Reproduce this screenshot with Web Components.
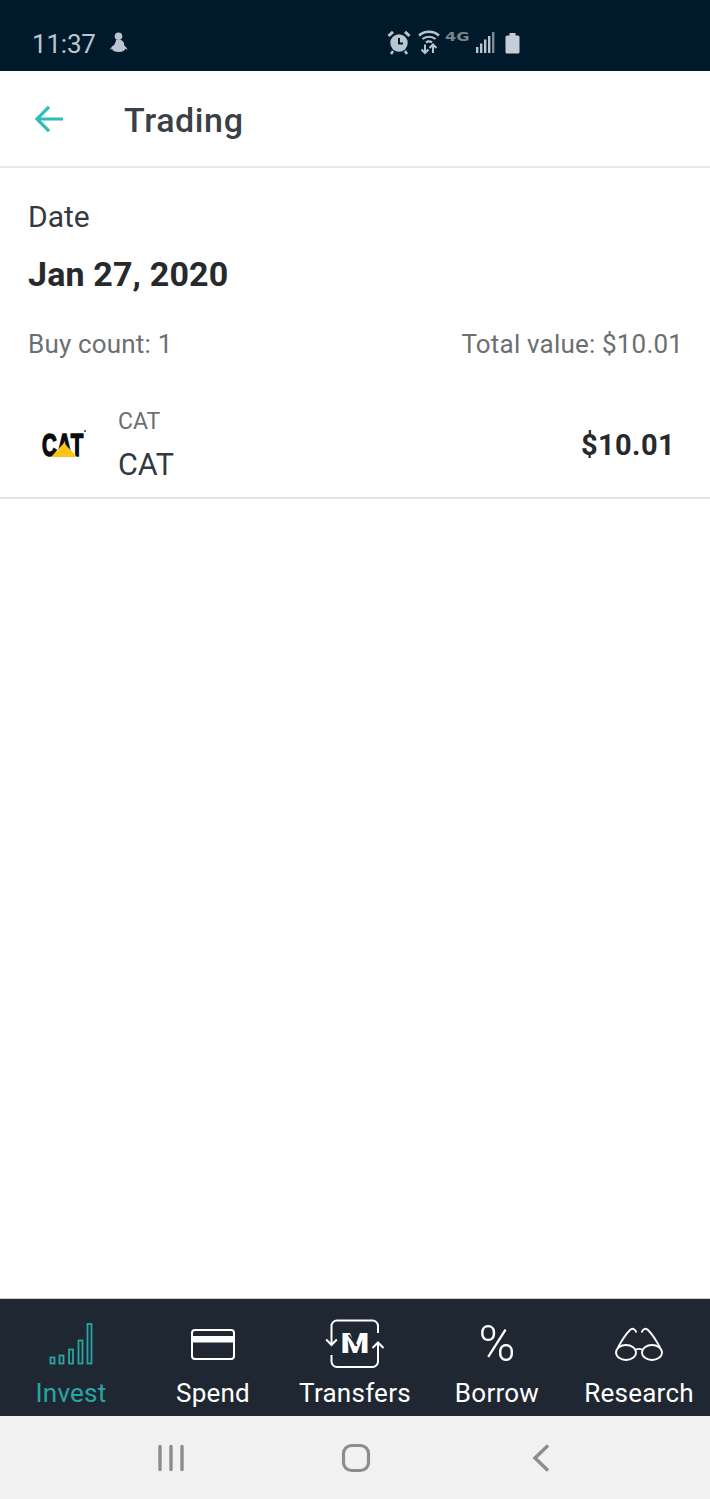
<!DOCTYPE html>
<html>
<head>
<meta charset="utf-8">
<title>Trading</title>
<style>
  html, body { margin: 0; height: 100%; }
  body { font-family: Roboto, "Liberation Sans", sans-serif; background: #fff; }
  #app { display: flex; flex-direction: column; height: 1499px; }
</style>
</head>
<body>
<div id="app">
  <status-bar time="11:37"></status-bar>
  <app-header name="Trading"></app-header>
  <trade-summary date="Jan 27, 2020" buys="Buy count: 1" total="Total value: $10.01"></trade-summary>
  <holding-row ticker="CAT" name="CAT" value="$10.01"></holding-row>
  <div style="flex:1"></div>
  <tab-bar>
    <tab-item label="Invest" icon="invest" active></tab-item>
    <tab-item label="Spend" icon="spend"></tab-item>
    <tab-item label="Transfers" icon="transfers"></tab-item>
    <tab-item label="Borrow" icon="borrow"></tab-item>
    <tab-item label="Research" icon="research"></tab-item>
  </tab-bar>
  <nav-bar></nav-bar>
</div>

<script>
class StatusBar extends HTMLElement {
  constructor() {
    super();
    const template = document.createElement("template");
    template.innerHTML = `
      <style>
        :host { display: block; height: 71px; background: #011a2b; color: #b9c6d0; flex: none; }
        .bar { position: relative; height: 100%; display: flex; align-items: flex-end; box-sizing: border-box; padding: 0 0 12px 32px; }
        .time { font-size: 26px; line-height: 30px; letter-spacing: -0.2px; }
        .left { margin-left: 14px; margin-bottom: 6px; display: block; }
        .icons { position: absolute; left: 387px; top: 30px; display: flex; align-items: flex-start; }
        svg { display: block; }
        .lte { font: 700 12px/12px "DejaVu Sans", sans-serif; color: #77848e; margin: 1px 0 0 5px; width: 31px; transform: scaleX(1.35); transform-origin: left; }
      </style>
      <div class="bar">
        <span class="time">${this.getAttribute("time")}</span>
        <svg class="left" width="18" height="21" viewBox="0 0 18 21" fill="#b9c6d0">
          <circle cx="8.500" cy="4.200" r="3.800"/>
          <path d="M6 8h5c2.500 1 3.500 3.200 3.200 5.500 1.500 1 2.800 2.500 3.300 4.500-.8-.6-1.500-1-2.200-1.200-.5 2-2.500 3.200-6.300 3.200S2.500 19 2 16.800c-.7.200-1.300.6-2 1.200.5-2 1.800-3.500 3.300-4.500C4.500 12.500 5.500 11 6 8z"/>
        </svg>
        <div class="icons">
          <svg width="24" height="26" viewBox="0 0 24 26" fill="none">
            <path d="M1.500 6 6 1.800M22.500 6 18 1.800" stroke="#b9c6d0" stroke-width="3"/>
            <circle cx="12" cy="13" r="8.700" fill="#b9c6d0"/>
            <path d="M12 8v5.500h4" stroke="#011a2b" stroke-width="2"/>
            <path d="M6 21l-2 3M18 21l2 3" stroke="#b9c6d0" stroke-width="2.500"/>
          </svg>
          <svg style="margin-left:7px;margin-top:-1px" width="22" height="26" viewBox="0 0 22 26" fill="none" stroke="#b9c6d0">
            <path d="M1 6.500c5.500-5 14.500-5 20 0" stroke-width="2.400"/>
            <path d="M4.500 10c3.500-3 9.500-3 13 0" stroke-width="2.200"/>
            <path d="M8 13.500c1.800-1.300 4.200-1.300 6 0" stroke-width="2.200"/>
            <path d="M7 15.500V24M3.500 20.500 7 24l3.500-3.500M15 24v-8.500M11.500 19 15 15.500l3.500 3.500" stroke-width="2"/>
          </svg>
          <span class="lte">4G</span>
          <svg style="margin-top:2px" width="20" height="22" viewBox="0 0 20 22" fill="#7d8a94">
            <rect x="0" y="15" width="2.400" height="6" fill="#b9c6d0"/>
            <rect x="4" y="11.500" width="2.400" height="9.500" fill="#b9c6d0"/>
            <rect x="8" y="7.500" width="2.400" height="13.500" fill="#b9c6d0"/>
            <rect x="12" y="4" width="2.400" height="17" fill="#b9c6d0"/>
            <rect x="16" y="0" width="2.400" height="21"/>
          </svg>
          <svg style="margin-left:9px;margin-top:3px" width="15" height="21" viewBox="0 0 15 21" fill="#c3ced6">
            <rect x="4.500" y="0" width="6" height="3"/>
            <rect x="0.500" y="2.500" width="14" height="18" rx="1.500"/>
          </svg>
        </div>
      </div>`;
    this.attachShadow({ mode: "open" });
    this.shadowRoot.appendChild(template.content.cloneNode(true));
  }
}
customElements.define("status-bar", StatusBar);

class AppHeader extends HTMLElement {
  constructor() {
    super();
    const template = document.createElement("template");
    template.innerHTML = `
      <style>
        :host { display: block; flex: none; }
        .head { height: 95px; border-bottom: 2px solid #e8e8e8; display: flex; align-items: center; padding-left: 35px; }
        svg { display: block; margin-top: 1px; }
        .name { margin-left: 60px; font-size: 34px; font-weight: 500; color: #3a4045; letter-spacing: 0.6px; margin-top: 2px; }
      </style>
      <div class="head">
        <svg width="29" height="28" viewBox="0 0 29 28" fill="none" stroke="#2cbdb9" stroke-width="3.200">
          <path d="M28 14H2.500M14 1.800 2 14l12 12.200"/>
        </svg>
        <span class="name">${this.getAttribute("name")}</span>
      </div>`;
    this.attachShadow({ mode: "open" });
    this.shadowRoot.appendChild(template.content.cloneNode(true));
  }
}
customElements.define("app-header", AppHeader);

class TradeSummary extends HTMLElement {
  constructor() {
    super();
    const template = document.createElement("template");
    template.innerHTML = `
      <style>
        :host { display: block; flex: none; padding: 31px 27px 0 28px; }
        .label { font-size: 30px; line-height: 36px; color: #333a3f; }
        .date { font-size: 34px; line-height: 40px; font-weight: 700; color: #272a2d; margin-top: 19px; letter-spacing: 0.15px; }
        .counts { display: flex; justify-content: space-between; margin-top: 34px; font-size: 26px; line-height: 32px; color: #6c6f72; letter-spacing: 0.18px; }
      </style>
      <div class="label">Date</div>
      <div class="date">${this.getAttribute("date")}</div>
      <div class="counts">
        <span>${this.getAttribute("buys")}</span>
        <span>${this.getAttribute("total")}</span>
      </div>`;
    this.attachShadow({ mode: "open" });
    this.shadowRoot.appendChild(template.content.cloneNode(true));
  }
}
customElements.define("trade-summary", TradeSummary);

class HoldingRow extends HTMLElement {
  constructor() {
    super();
    const template = document.createElement("template");
    template.innerHTML = `
      <style>
        :host { display: block; flex: none; }
        .row { height: 103px; padding-top: 34px; border-bottom: 2px solid #e4e4e4; display: flex; align-items: center; }
        .logo { position: relative; width: 46px; height: 28px; margin-left: 41px; margin-top: -2px; flex: none; }
        .logo span { position: absolute; left: 1px; top: -3px; font: 700 32px/34px "Liberation Sans", sans-serif; color: #0b0b0b; transform: scaleX(0.64); transform-origin: left top; letter-spacing: 0.5px; -webkit-text-stroke: 1.6px #0b0b0b; }
        .logo svg { position: absolute; left: 9px; top: 12px; display: block; }
        .logo i { position: absolute; left: 43px; top: -1px; width: 2px; height: 2px; background: #666; }
        .text { margin-left: 31px; display: flex; flex-direction: column; }
        .ticker { font-size: 23px; line-height: 28px; color: #6c6f72; }
        .name { font-size: 30.500px; line-height: 38px; color: #333a3f; margin-top: 10px; }
        .value { margin-left: auto; margin-right: 35px; margin-top: -2px; font-size: 29px; font-weight: 700; color: #272a2d; letter-spacing: 0.4px; }
      </style>
      <div class="row">
        <div class="logo">
          <span>CAT</span>
          <i></i>
          <svg width="28" height="15" viewBox="0 0 28 15"><path d="M14 0 27 14H1z" fill="#fcc419"/></svg>
        </div>
        <div class="text">
          <span class="ticker">${this.getAttribute("ticker")}</span>
          <span class="name">${this.getAttribute("name")}</span>
        </div>
        <span class="value">${this.getAttribute("value")}</span>
      </div>`;
    this.attachShadow({ mode: "open" });
    this.shadowRoot.appendChild(template.content.cloneNode(true));
  }
}
customElements.define("holding-row", HoldingRow);

const tabIcons = {
  invest: `<svg width="44" height="42" viewBox="0 0 44 42" fill="none" stroke="currentColor" stroke-width="1.800">
      <rect x="1.500" y="34.500" width="4" height="6"/><rect x="10.500" y="32.500" width="4" height="8"/>
      <rect x="20" y="26.500" width="4" height="14"/><rect x="29.500" y="17.500" width="4" height="23"/>
      <rect x="38.500" y="1" width="4" height="39.500"/></svg>`,
  spend: `<svg width="44" height="31" viewBox="0 0 44 31" fill="none">
      <rect x="1" y="1" width="42" height="29" rx="3" stroke="currentColor" stroke-width="2"/>
      <rect x="1" y="7" width="42" height="6.500" fill="currentColor"/></svg>`,
  transfers: `<svg width="60" height="50" viewBox="0 0 60 50" fill="none" stroke="currentColor" stroke-width="2">
      <path d="M6.500 25V7c0-3 2.500-5.500 5.500-5.500h35.500c3 0 5.500 2.500 5.500 5.500v7"/>
      <path d="M6.500 36v6.500c0 3 2.500 5.500 5.500 5.500h35.500c3 0 5.500-2.500 5.500-5.500V24"/>
      <path d="M1.200 20.500 6.500 26l5.300-5.500"/>
      <path d="M47.500 29 53 23.500 58.500 29"/></svg>
      <span class="mark">M</span>
      <svg class="cut" width="60" height="50" viewBox="0 0 60 50" fill="none"><path d="M23.500 16 32 27" stroke="#1f2732" stroke-width="1.800"/></svg>`,
  borrow: `<span class="pct">%</span>`,
  research: `<svg width="48" height="34" viewBox="0 0 48 34" fill="none" stroke="currentColor" stroke-width="1.800">
      <ellipse cx="11" cy="25.500" rx="10" ry="7.500"/><ellipse cx="37" cy="25.500" rx="10" ry="7.500"/>
      <path d="M21 22.500c2-.8 4-.8 6 0"/>
      <path d="M3 20.500C7 13 12 6 15 3c1.500-1.500 3.500-1.500 5 0l1.500 2.500"/>
      <path d="M45 20.500C41 13 36 6 33 3c-1.500-1.500-3.500-1.500-5 0l-1.500 2.500"/></svg>`
};

class TabItem extends HTMLElement {
  constructor() {
    super();
    const active = this.hasAttribute("active");
    const template = document.createElement("template");
    template.innerHTML = `
      <style>
        :host { display: flex; flex-direction: column; align-items: center; color: ${active ? "#2aa5a6" : "#fff"}; }
        .icon { position: relative; height: 60px; display: flex; align-items: center; justify-content: center; margin-top: 15px; }
        svg { display: block; }
        .mark { position: absolute; left: 50%; top: 50%; transform: translate(-50%, -50%) scaleX(1.2); font: 900 27px/27px Roboto, sans-serif; color: #fff; }
        .cut { position: absolute; left: 0; top: 5px; }
        .pct { font-size: 50px; font-weight: 300; line-height: 60px; }
        .label { font-size: 26px; line-height: 30px; margin-top: 4px; white-space: nowrap; letter-spacing: 0.25px; }
      </style>
      <div class="icon">${tabIcons[this.getAttribute("icon")]}</div>
      <span class="label">${this.getAttribute("label")}</span>`;
    this.attachShadow({ mode: "open" });
    this.shadowRoot.appendChild(template.content.cloneNode(true));
  }
}
customElements.define("tab-item", TabItem);

class TabBar extends HTMLElement {
  constructor() {
    super();
    const template = document.createElement("template");
    template.innerHTML = `
      <style>
        :host { display: grid; grid-template-columns: repeat(5, 142px); flex: none; height: 117px; background: #1f2732; border-top: 1px solid #c9cdd1; overflow: hidden; }
      </style>
      <slot></slot>`;
    this.attachShadow({ mode: "open" });
    this.shadowRoot.appendChild(template.content.cloneNode(true));
  }
}
customElements.define("tab-bar", TabBar);

class NavBar extends HTMLElement {
  constructor() {
    super();
    const template = document.createElement("template");
    template.innerHTML = `
      <style>
        :host { display: flex; flex: none; height: 83px; background: #f1f1f1; align-items: center; padding-left: 157px; }
        svg { display: block; }
        .home { margin-left: 156px; }
        .back { margin-left: 161px; }
      </style>
      <svg width="28" height="28" viewBox="0 0 28 28" fill="none" stroke="#8d8d8d" stroke-width="3.400" stroke-linecap="round">
        <path d="M3 2.500v23M14 2.500v23M25 2.500v23"/>
      </svg>
      <svg class="home" width="30" height="30" viewBox="0 0 30 30" fill="none" stroke="#8d8d8d" stroke-width="3.200">
        <rect x="2.500" y="2.500" width="25" height="25" rx="8"/>
      </svg>
      <svg class="back" width="18" height="28" viewBox="0 0 18 28" fill="none" stroke="#8d8d8d" stroke-width="3.400">
        <path d="M16 1.500 3 14l13 12.500"/>
      </svg>`;
    this.attachShadow({ mode: "open" });
    this.shadowRoot.appendChild(template.content.cloneNode(true));
  }
}
customElements.define("nav-bar", NavBar);
</script>
</body>
</html>
